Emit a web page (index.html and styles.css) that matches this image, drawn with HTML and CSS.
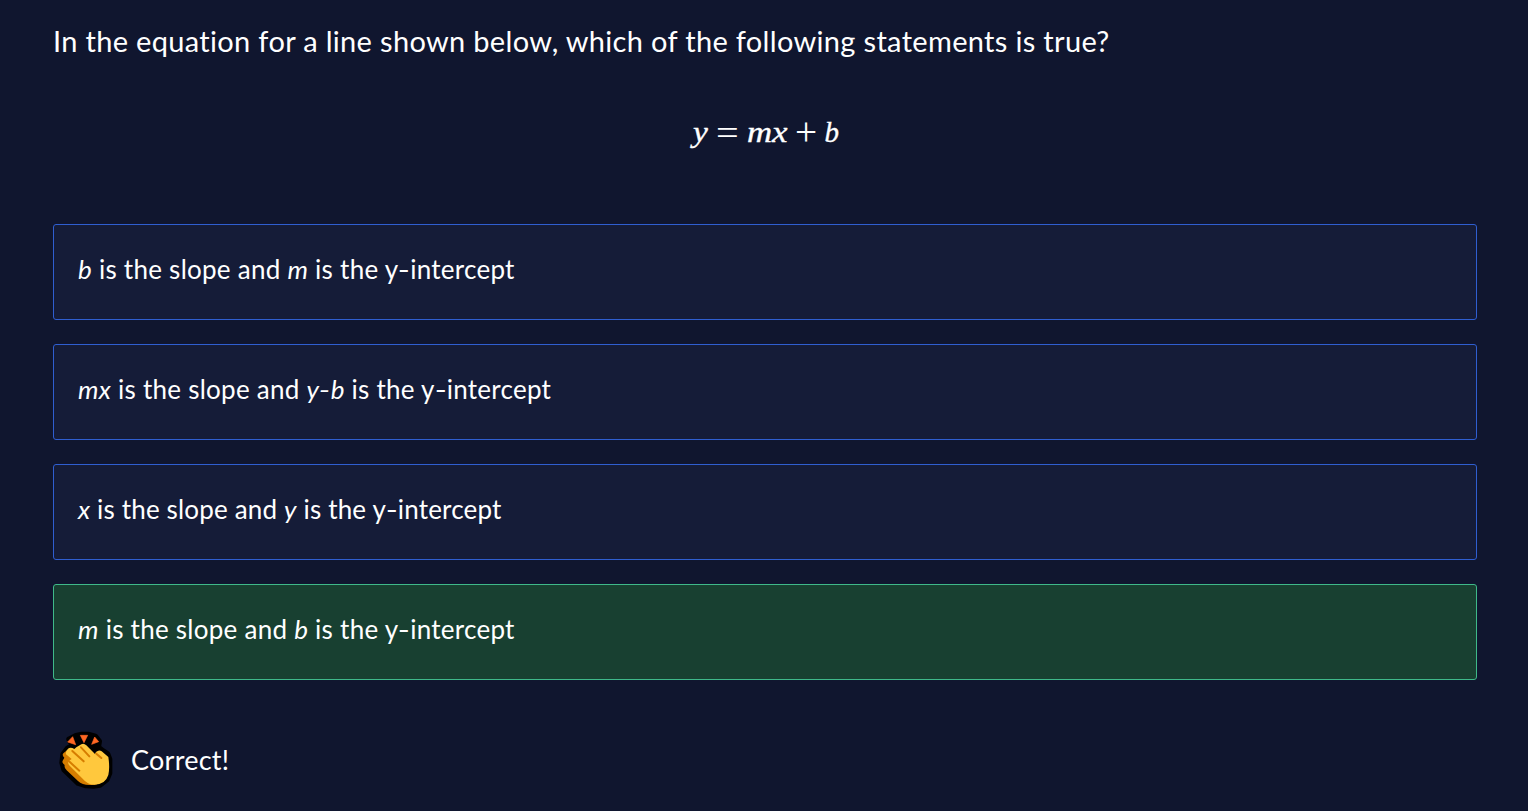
FILE: index.html
```html
<!DOCTYPE html>
<html lang="en">
<head>
<meta charset="utf-8">
<title>Slope and intercept quiz</title>
<link rel="stylesheet" href="styles.css">
</head>
<body>
<main class="quiz">
  <h1 class="question">In the equation for a line shown below, which of the following statements is true?</h1>
  <div class="equation"><i class="y">y</i><span class="eq">=</span><i class="m">m</i><i class="x">x</i><span class="plus">+</span><i class="b">b</i></div>
  <div class="options">
    <div class="option"><em>b</em> is the slope and <em>m</em> is the y<span class="hyphen">-</span>intercept</div>
    <div class="option"><em>mx</em> is the slope and <em>y<span class="hyphen">-</span>b</em> is the y<span class="hyphen">-</span>intercept</div>
    <div class="option narrow"><em>x</em> is the slope and <em>y</em> is the y<span class="hyphen">-</span>intercept</div>
    <div class="option correct"><em>m</em> is the slope and <em>b</em> is the y<span class="hyphen">-</span>intercept</div>
  </div>
  <div class="feedback">
    <svg class="clap" viewBox="0 0 210 225" aria-hidden="true">
      <path d="M58 52L78 42L96 38H114L136 44L147 58L144 76L156 86L172 96L178 112V153L170 172L150 188L130 191L108 190L85 183L43 143L37 122L40 97L53 80L69 70Z" fill="#000" stroke="#000" stroke-width="18" stroke-linejoin="round"/>
      <path d="M53 60L68 44L77 68ZM91 40H113L102 62ZM125 67L134 45L146 59Z" fill="#ff6723" stroke="#ff6723" stroke-width="2"/>
      <path d="M52 84L40 94Q35 100 43 107L38 116Q35 122 44 129Q42 138 50 145L84 177Q98 191 125 189Q155 187 163 167L120 150Z" fill="#d67d00"/>
      <path d="M54 80Q62 74 73 81L79 76L94 67Q101 62 109 70L135 96L138 90Q147 82 155 88L175 105Q180 137 175 159Q166 188 133 188Q113 188 98 170L59 131Q51 123 57 116L65 111L48 97Q46 88 54 80Z" fill="#ffc83d"/>
      <path d="M57 118L88 146M67 87L101 118M93 76L118 103M139 95L154 108" fill="none" stroke="#d67d00" stroke-width="6" stroke-linecap="round"/>
    </svg>
    <span class="verdict">Correct!</span>
  </div>
</main>
</body>
</html>
```
FILE: styles.css
```css
body { margin: 0; background: #10162f; color: #fff; font-family: Lato, "Open Sans", sans-serif; }
.quiz { box-sizing: border-box; height: 811px; padding: 23px 51px 0 53px; overflow: hidden; }
.question { margin: 0; font-size: 29px; line-height: 36px; font-weight: 400; letter-spacing: 0.325px; white-space: nowrap; }
.equation { display: grid; grid-template-columns: 24px 30px 25px 24px 29px 16px; justify-content: center; align-items: baseline; height: 40px; margin: 52px 0 0 3px; font: 29px/40px "Liberation Serif", serif; -webkit-text-stroke: 0.35px #fff; }
.equation > * { transform-origin: left center; }
.equation .m, .equation .x { transform: scaleX(1.2); }
.equation .y { transform: scaleX(1.15); }
.equation .eq, .equation .plus { font-size: 35px; line-height: 40px; -webkit-text-stroke: 0; }
.equation .eq { transform: translate(-1px, 3px) scaleX(1.15); }
.equation .plus { transform: translate(-1px, 2px) scale(1.12); }
.options { display: grid; gap: 24px; margin-top: 73px; }
.option { box-sizing: border-box; height: 96px; padding: 26px 24px; border: 1px solid #2f5ed0; border-radius: 3px; background: #151c38; font-size: 26px; line-height: 36px; letter-spacing: 0.26px; white-space: nowrap; }
.hyphen { display: inline-block; margin: 0 1px; transform: scaleX(1.25); }
.option.narrow { letter-spacing: 0.17px; }
.option.correct { background: #184031; border-color: #3fb98a; }
.feedback { display: flex; align-items: center; height: 75px; margin: 42px 0 0 -3px; }
.clap { width: 70px; height: 75px; margin-right: 11px; }
.verdict { font-size: 27px; line-height: 36px; letter-spacing: 0.25px; }
```
